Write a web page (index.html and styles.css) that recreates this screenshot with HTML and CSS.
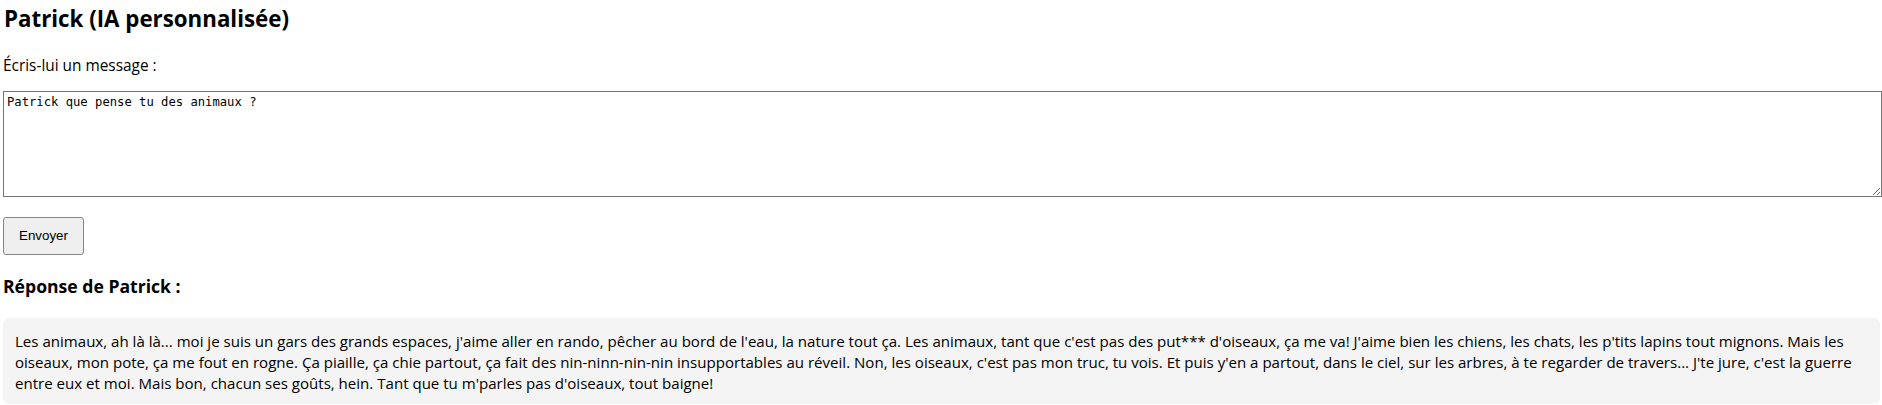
FILE: index.html
```html
<!DOCTYPE html>
<html lang="fr">
<head>
<meta charset="utf-8">
<title>Patrick (IA personnalisée)</title>
<link rel="stylesheet" href="styles.css">
</head>
<body>
<h2 class="title">Patrick (IA personnalisée)</h2>
<p class="label">Écris-lui un message :</p>
<textarea class="message">Patrick que pense tu des animaux ?</textarea>
<div class="actions"><button class="send" type="button">Envoyer</button></div>
<h3 class="reply-title">Réponse de Patrick :</h3>
<div class="reply">Les animaux, ah là là... moi je suis un gars des grands espaces, j'aime aller en rando, pêcher au bord de l'eau, la nature tout ça. Les animaux, tant que c'est pas des put*** d'oiseaux, ça me va! J'aime bien les chiens, les chats, les p'tits lapins tout mignons. Mais les oiseaux, mon pote, ça me fout en rogne. Ça piaille, ça chie partout, ça fait des nin-ninn-nin-nin insupportables au réveil. Non, les oiseaux, c'est pas mon truc, tu vois. Et puis y'en a partout, dans le ciel, sur les arbres, à te regarder de travers... J'te jure, c'est la guerre entre eux et moi. Mais bon, chacun ses goûts, hein. Tant que tu m'parles pas d'oiseaux, tout baigne!</div>
</body>
</html>
```

FILE: styles.css
```css
html {
  overflow: hidden;
}
body {
  margin: 0;
  padding: 0 2px 0 3px;
  font-family: "Open Sans", "Noto Sans", sans-serif;
  color: #000;
  background: #fff;
}
.title {
  margin: 4px 0 0 1px;
  font-size: 22.3px;
  line-height: 30px;
  font-weight: 700;
}
.label {
  margin: 21px 0 0;
  font-size: 15.4px;
  line-height: 22px;
}
.message {
  display: block;
  box-sizing: border-box;
  width: calc(100% + 2px);
  height: 106px;
  margin: 14px 0 0;
  padding: 3px 2px 2px 3px;
  border: 1px solid #767676;
  font-family: "DejaVu Sans Mono", "Liberation Mono", monospace;
  font-size: 12.2px;
  color: #000;
  resize: both;
}
.actions {
  margin-top: 20px;
  display: flex;
}
.send {
  font-family: "Liberation Sans", Arial, sans-serif;
  font-size: 13.33px;
  line-height: 16px;
  padding: 10px 15px;
  background: #efefef;
  border: 1px solid #858585;
  border-radius: 3px;
  color: #000;
}
.reply-title {
  margin: 19px 0 0;
  font-size: 17.6px;
  line-height: 24px;
  font-weight: 700;
}
.reply {
  margin-top: 20px;
  padding: 13px 6px 10px 12px;
  background: #f4f4f4;
  border-radius: 6px;
  font-size: 15.07px;
  line-height: 21px;
}
```
